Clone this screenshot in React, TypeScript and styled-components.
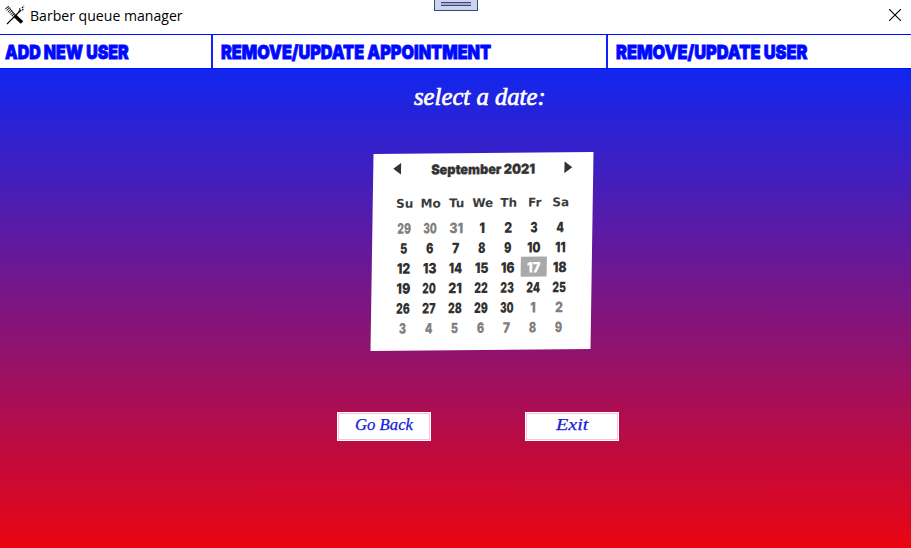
import React, { useLayoutEffect, useRef, useState } from 'react';
import styled, { createGlobalStyle } from 'styled-components';

const GlobalStyle = createGlobalStyle`
  * { box-sizing: border-box; }
  body { margin: 0; overflow: hidden; font-family: "Open Sans", sans-serif; }
`;

const Window = styled.div`
  width: 911px;
  height: 548px;
  display: flex;
  flex-direction: column;
  background: #fff;
`;

const TitleBar = styled.header`
  position: relative;
  height: 34px;
  display: flex;
  align-items: flex-start;
  padding: 5px 10px 0 5px;
`;

const Title = styled.div`
  flex: 1;
  padding-left: 4px;
  color: #000;
  font: 15px/21px "Open Sans", sans-serif;
`;

const CloseButton = styled.button`
  width: 12px;
  height: 12px;
  margin-top: 4px;
  padding: 0;
  border: 0;
  background: none;
  svg { display: block; }
`;

const Grip = styled.div`
  position: absolute;
  left: 434px;
  top: 0;
  width: 44px;
  height: 11px;
  padding: 2px 6px 0;
  border: 1px solid #3f4673;
  border-top: 0;
  background: #ccd5f0;
`;

const GripBars = styled.div`
  height: 4px;
  border: solid #3f4673;
  border-width: 1px 0;
  background: #a3acd0;
`;

const Menu = styled.nav`
  height: 35px;
  display: grid;
  grid-template-columns: 213px 395px 303px;
  border: solid #0010ff;
  border-width: 1px 0;
`;

const MenuItem = styled.div`
  padding: 8px 0 0 5px;
  border-right: 2px solid #1020ff;
  color: #0009ff;
  font: 900 19px/20px Inter, sans-serif;
  -webkit-text-stroke: 0.8px #0009ff;
  & + & { padding-left: 8px; }
  &:last-child { border-right: 0; }
`;

const Content = styled.main`
  flex: 1;
  display: flex;
  flex-direction: column;
  align-items: center;
  background: linear-gradient(#1126ef, #eb0412);
`;

const Prompt = styled.div`
  height: 30px;
  margin-top: 12px;
  padding-left: 49px;
  color: #fff;
  font: italic 26px/32px "Liberation Serif", serif;
  -webkit-text-stroke: 0.7px #fff;
`;

const Calendar = styled.section`
  width: 220px;
  height: 197px;
  margin: 42px 0 0 52px;
  padding: 6px 20px 0 20px;
  background: #fff;
  color: #333;
  transform: matrix(1, -0.0091, -0.0152, 1, 0, 0);
`;

const MonthBar = styled.div`
  width: 179px;
  height: 20px;
  display: flex;
  align-items: center;
  justify-content: space-between;
  svg { display: block; margin-top: -2px; }
`;

const MonthName = styled.div`
  padding-left: 1px;
  font: 900 13.5px/20px Inter, sans-serif;
  -webkit-text-stroke: 0.3px #333;
`;

const Week = styled.div`
  display: grid;
  grid-template-columns: repeat(7, 26px);
  width: 182px;
  margin-left: -1px;
`;

const WeekHead = styled(Week)`
  margin-top: 14px;
  margin-bottom: 4px;
  font: bold 12px/20px "DejaVu Sans", sans-serif;
  text-align: center;
  color: #3b3b3b;
`;

const Day = styled.div<{ $muted: boolean; $selected: boolean }>`
  height: 20px;
  text-align: center;
  font: 900 14.5px/21px Inter, sans-serif;
  color: ${(p) => (p.$selected ? '#fff' : p.$muted ? '#808080' : '#303030')};
  background: ${(p) => (p.$selected ? '#a9a9a9' : 'transparent')};
  border-radius: 1px;
`;

const Actions = styled.div`
  display: flex;
  gap: 94px;
  margin: 62px 0 0 45px;
`;

const ActionButton = styled.button`
  width: 94px;
  height: 29px;
  padding: 0 0 3px;
  border: 1px solid #fff;
  background: #fff;
  box-shadow: inset 0 0 0 1px #f2c5dc;
  color: #1720dd;
  font: italic 17px/24px "Liberation Serif", serif;
  -webkit-text-stroke: 0.25px #1720dd;
`;

const Fitted = styled.span`
  display: inline-block;
  vertical-align: top;
  overflow: visible;
  white-space: nowrap;
  text-align: left;
`;

const Glyphs = styled.span`
  display: inline-block;
  transform-origin: 0 50%;
`;

function FitText({ width, children }: { width: number; children: string }) {
  const ref = useRef<HTMLSpanElement>(null);
  const [scale, setScale] = useState(1);
  useLayoutEffect(() => {
    if (ref.current) setScale(width / ref.current.offsetWidth);
  }, [width]);
  return (
    <Fitted style={{ width }}>
      <Glyphs ref={ref} style={{ transform: `scaleX(${scale})` }}>{children}</Glyphs>
    </Fitted>
  );
}

function AppIcon() {
  return (
    <svg width="21" height="21" viewBox="0 0 21 21" fill="none" stroke="#000">
      <path d="M1.5 2.5 9 10.5" strokeWidth="4" strokeDasharray=".8 1.1" />
      <path d="m3 1 8 10" strokeWidth=".8" />
      <path d="M2 19 15.5 5.5" strokeWidth="1.1" />
      <path d="m9.5 10.5 7.5 7" strokeWidth="3.6" />
      <path d="m14 7 1-4M15 6l4-2M17 3l2-2" strokeWidth="1.3" strokeDasharray="1.5 .8" />
    </svg>
  );
}

const days = [
  29, 30, 31, 1, 2, 3, 4, 5, 6, 7, 8, 9, 10, 11, 12, 13, 14, 15, 16, 17, 18,
  19, 20, 21, 22, 23, 24, 25, 26, 27, 28, 29, 30, 1, 2, 3, 4, 5, 6, 7, 8, 9,
];

export default function App() {
  return (
    <>
      <GlobalStyle />
      <Window>
        <TitleBar>
          <AppIcon />
          <Title><FitText width={153}>Barber queue manager</FitText></Title>
          <Grip><GripBars /></Grip>
          <CloseButton aria-label="Close">
            <svg width="12" height="12" stroke="#000" strokeWidth="1.1"><path d="m0 0 12 12M12 0 0 12" /></svg>
          </CloseButton>
        </TitleBar>
        <Menu>
          <MenuItem><FitText width={124}>ADD NEW USER</FitText></MenuItem>
          <MenuItem><FitText width={270}>REMOVE/UPDATE APPOINTMENT</FitText></MenuItem>
          <MenuItem><FitText width={191}>REMOVE/UPDATE USER</FitText></MenuItem>
        </Menu>
        <Content>
          <Prompt><FitText width={132}>select a date:</FitText></Prompt>
          <Calendar>
            <MonthBar>
              <svg width="8" height="12" fill="#333"><path d="M8 0v12L0 6z" /></svg>
              <MonthName><FitText width={104}>September 2021</FitText></MonthName>
              <svg width="8" height="12" fill="#333"><path d="M0 0v12l8-6z" /></svg>
            </MonthBar>
            <WeekHead>
              {['Su', 'Mo', 'Tu', 'We', 'Th', 'Fr', 'Sa'].map((d) => <span key={d}>{d}</span>)}
            </WeekHead>
            <Week>
              {days.map((d, i) => (
                <Day key={i} $muted={i < 3 || i > 32} $selected={i === 19}>
                  <FitText width={d > 9 ? (d === 11 ? 10.5 : 13.5) : d === 1 ? 6 : 7.5}>{String(d)}</FitText>
                </Day>
              ))}
            </Week>
          </Calendar>
          <Actions>
            <ActionButton><FitText width={58}>Go Back</FitText></ActionButton>
            <ActionButton><FitText width={32}>Exit</FitText></ActionButton>
          </Actions>
        </Content>
      </Window>
    </>
  );
}
